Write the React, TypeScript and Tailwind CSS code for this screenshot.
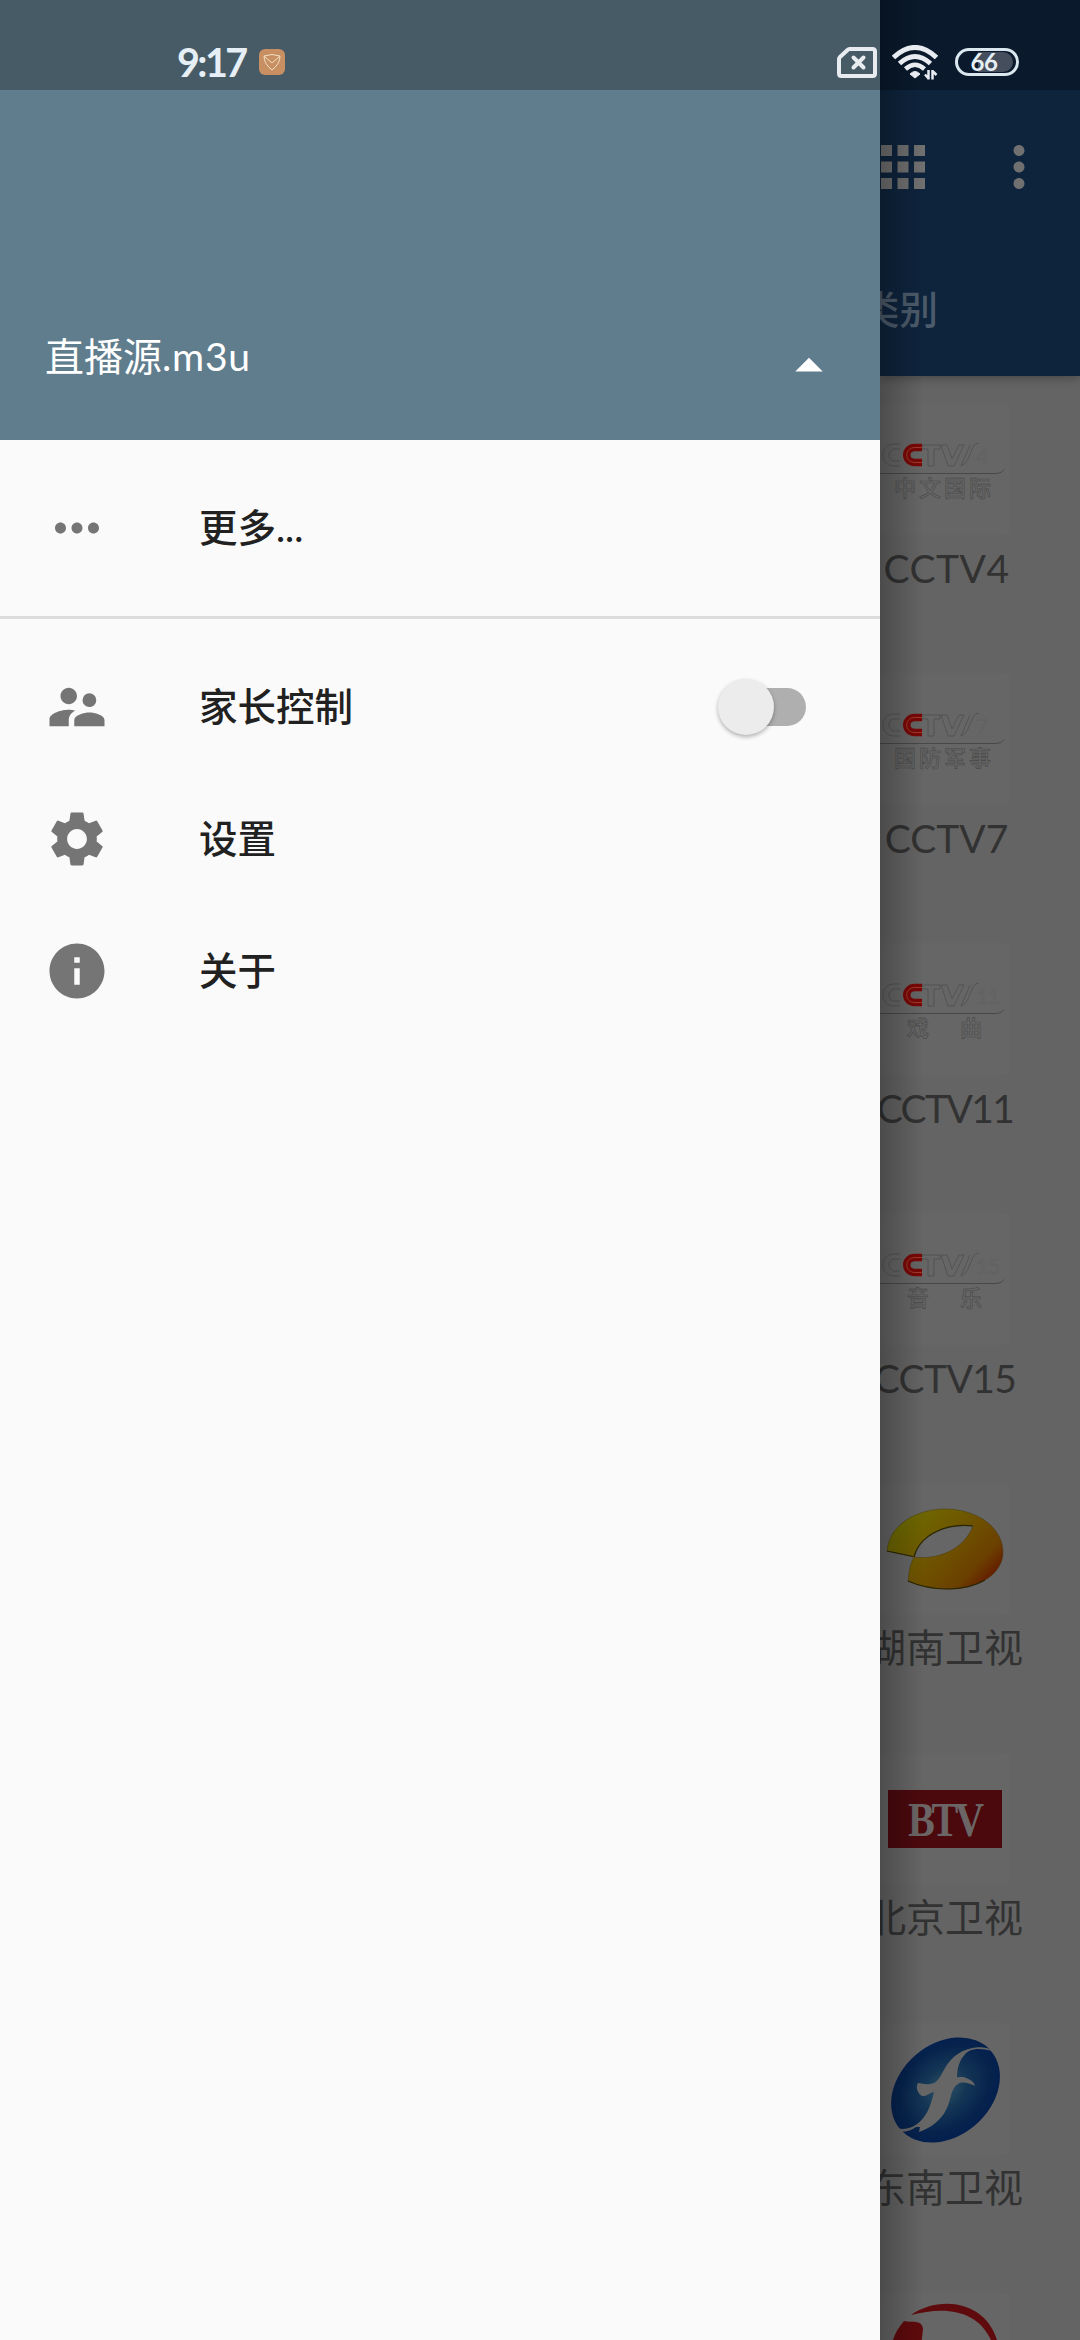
import type { ReactNode } from "react";
import {
  MdApps,
  MdArrowDropUp,
  MdInfo,
  MdMoreHoriz,
  MdMoreVert,
  MdSettings,
  MdSupervisorAccount,
} from "react-icons/md";

interface Channel {
  name: string;
  logo: ReactNode;
  nameClass: string;
}

interface CctvLogoProps {
  number: string;
  caption: string;
  captionX: string;
}

function CctvLogo({ number, caption, captionX }: CctvLogoProps) {
  return (
    <svg viewBox="0 0 130 132" className="h-full w-full" fill="none">
      <g
        stroke="#484848"
        strokeWidth="0.6"
        fontFamily="Lato, 'Noto Sans CJK SC', sans-serif"
      >
        <path d="M20 41H14C-1 41-1 63 14 63h6M20 46h-5c-8 0-8 12 0 12h5" />
        <path d="M42 42h18v4h-6v17h-6V46h-6zM61 42h6l5 14 7-14h5L74 63h-6z" />
        <path d="M90 42 81 63q5-2 7-7l5-12q2-4 6-4" />
        <path d="M-8 70.500H116q6 0 8-4" stroke="#454545" strokeWidth="0.9" />
        <text x="96" y="61" fontSize="21" stroke="#606060">
          {number}
        </text>
        <text x={captionX} y="93" fontSize="22" fontWeight="500">
          {caption}
        </text>
      </g>
      <path d="M42 44.500h-7c-11 0-11 15 0 15h7" stroke="#780808" strokeWidth="7.500" />
      <path d="M42 44.500h-7c-11 0-11 15 0 15h7" stroke="#a8402c" strokeWidth="0.9" />
    </svg>
  );
}

function HunanLogo() {
  return (
    <svg viewBox="0 0 130 132" className="h-full w-full">
      <defs>
        <linearGradient id="hunan" x1="0" y1="0.1" x2="1" y2="0.75">
          <stop offset="0" stopColor="#6d7000" />
          <stop offset="0.45" stopColor="#6f5800" />
          <stop offset="0.82" stopColor="#6b4000" />
          <stop offset="1" stopColor="#641800" />
        </linearGradient>
      </defs>
      <path
        fill="url(#hunan)"
        stroke="#3d3205"
        strokeWidth="0.4"
        fillRule="evenodd"
        d="M7 68C9 42 36 26 65 26c34 0 58 20 58 43 0 22-24 37-55 37-15 0-29-3-40-8 1-9 2-17 6-24zM34 74c20 3 49-5 59-31-26-3-53 8-59 31z"
      />
      <path
        d="M7 68l26 5.500M34 74c6-23 33-34 59-31M28 98c11 5 25 8 40 8 14 0 27-3 37-9"
        fill="none"
        stroke="#2a2604"
        strokeWidth="1.200"
      />
    </svg>
  );
}

function BtvLogo() {
  return (
    <div className="flex h-[58px] w-[114px] items-center justify-center bg-[#4b090d] pr-[2px]">
      <span className="scale-x-82 font-['Liberation_Serif',serif] text-[49px] leading-none font-bold tracking-[-4px] text-[#6c6566]">
        BTV
      </span>
    </div>
  );
}

function SoutheastLogo() {
  return (
    <svg viewBox="0 0 130 132" className="h-full w-full">
      <defs>
        <radialGradient id="southeast" cx="0.5" cy="0.48" r="0.52">
          <stop offset="0" stopColor="#2d5366" />
          <stop offset="0.4" stopColor="#143655" />
          <stop offset="0.8" stopColor="#06234d" />
          <stop offset="1" stopColor="#041f4e" />
        </radialGradient>
      </defs>
      <ellipse
        cx="65.500"
        cy="67"
        rx="60"
        ry="46"
        fill="url(#southeast)"
        transform="rotate(-41 65.500 67)"
      />
      <path
        fill="#666"
        d="M98 24C82 26 72 33 65 45c-6 11-8 15-15 16-4 1-8-1-12-1-3 4 0 11 4 13 4 1 7-3 12-4-3 12-7 28-22 35-8 3-13 2-19 0l2 5c8 0 14 0 21-5l4 0-1 5c12-4 22-12 27-22 6-11 4-21 12-26 5-3 10-1 17 2-1-5-6-7-9-8-3-2-7 0-9-1 0-11 4-21 12-26 7-3 15-2 23 0l-5-3c-6-1-9-1-15 0z"
      />
    </svg>
  );
}

function RedSwirlLogo() {
  return (
    <svg viewBox="0 0 130 132" className="h-full w-full" fill="#5f0a0c">
      <path d="M31 22C60 2 105 8 117 47l-4 5C101 18 68 12 31 22z" />
      <path d="M12 52c1-9 6-17 12-24 7 2 18-2 19 8l-2 18z" />
    </svg>
  );
}

const channels: Channel[] = [
  {
    name: "CCTV4",
    logo: <CctvLogo number="4" caption="中文国际" captionX="14 39 64 89" />,
    nameClass: "mt-[13px] ml-[3px] tracking-[0.5px]",
  },
  {
    name: "CCTV7",
    logo: <CctvLogo number="7" caption="国防军事" captionX="14 39 64 89" />,
    nameClass: "mt-[13px] ml-[3px]",
  },
  {
    name: "CCTV11",
    logo: <CctvLogo number="11" caption="戏曲" captionX="27 80" />,
    nameClass: "mt-[13px] tracking-[-1.6px]",
  },
  {
    name: "CCTV15",
    logo: <CctvLogo number="15" caption="音乐" captionX="27 80" />,
    nameClass: "mt-[13px] tracking-[-0.6px]",
  },
  { name: "湖南卫视", logo: <HunanLogo />, nameClass: "mt-[12px]" },
  { name: "北京卫视", logo: <BtvLogo />, nameClass: "mt-[12px]" },
  { name: "东南卫视", logo: <SoutheastLogo />, nameClass: "mt-[12px]" },
  { name: "", logo: <RedSwirlLogo />, nameClass: "mt-[12px]" },
];

function StatusBar() {
  return (
    <div className="absolute inset-x-0 top-0 z-20 flex h-[90px] items-center bg-black/27 pt-[34px] pr-[61px] pl-[177px] text-[#e6eff6]">
      <span className="w-[69px] font-[Lato,sans-serif] text-[39.5px] leading-none font-bold tracking-[-2.6px] whitespace-nowrap">
        9:17
      </span>
      <svg viewBox="0 0 26 26" className="ml-[13px] size-[26px]">
        <rect width="26" height="26" rx="6" fill="#c78f62" />
        <path
          d="M5 7q8-3 16 0 0 8-8 14Q5 15 5 7l8 7 8-7"
          fill="none"
          stroke="#f3e0c4"
          strokeWidth="1"
        />
      </svg>

      <div className="ml-auto flex items-center">
        <svg viewBox="0 0 40 31" className="h-[31px] w-[40px]" fill="none" stroke="#e8ecf1">
          <path
            d="M12.500 2H35.500Q38 2 38 4.500V26.500Q38 29 35.500 29H4.500Q2 29 2 26.500V12Q2 11 3 10L10.500 3Q11.500 2 12.500 2z"
            strokeWidth="4"
          />
          <path d="M16.500 10.500l10 10M26.500 10.500l-10 10" strokeWidth="4" strokeLinecap="round" />
        </svg>
        <svg viewBox="0 0 46 35" className="ml-[15px] h-[35px] w-[46px]" fill="none" stroke="#e8ecf1">
          <path d="M1.500 12.500Q23-7.500 44.500 12.500" strokeWidth="5" />
          <path d="M7.500 18.500Q23 4.500 38.500 18.500" strokeWidth="5" />
          <path d="M13.500 24Q23 15.500 32.500 24" strokeWidth="4.500" />
          <path d="M18 29q5-5 10 0l-5 4z" fill="#e8ecf1" strokeWidth="1" />
          <path d="M36.500 25v9.500M33 29.500l3.500 4M40.500 34.500V25M44.500 30l-4-4" strokeWidth="2.500" />
        </svg>
        <div className="relative ml-[17px] flex h-[28px] w-[64px] items-center justify-center overflow-hidden rounded-full border-[3px] border-[#dbe7ee]">
          <div className="absolute inset-y-[1px] left-[20px] w-[35px] rounded-r-full bg-[#444e5d]" />
          <span className="relative mr-[6px] font-[Lato,sans-serif] text-[24px] leading-none font-bold tracking-[-0.5px]">
            66
          </span>
        </div>
      </div>
    </div>
  );
}

interface MenuItemProps {
  icon: ReactNode;
  label: string;
  children?: ReactNode;
}

function MenuItem({ icon, label, children }: MenuItemProps) {
  return (
    <li className="flex h-[132px] items-center pr-[74px] pl-[44px] text-[#212121]">
      <span className="text-[66px] text-[#757575]">{icon}</span>
      <span className="mb-[2px] ml-[89px] text-[38.5px] leading-none font-medium">{label}</span>
      {children}
    </li>
  );
}

function Switch() {
  return (
    <div className="relative ml-auto h-[38px] w-[76px] rounded-full bg-[#afafaf]">
      <div className="absolute -top-[9px] -left-[12px] size-[56px] rounded-full bg-[#ececec] shadow-[0_2px_4px_rgba(0,0,0,0.3)]" />
    </div>
  );
}

function Drawer() {
  return (
    <aside className="flex w-[880px] shrink-0 flex-col bg-[#fafafa]">
      <header className="flex h-[440px] items-end justify-between bg-[#607d8d] pr-[38px] pb-[41px] pl-[45px] text-white">
        <span className="mb-[23px] text-[39px] leading-none">
          直播源<span className="tracking-[0.8px]">.m3u</span>
        </span>
        <MdArrowDropUp size={66} />
      </header>
      <ul className="py-[22px]">
        <MenuItem icon={<MdMoreHoriz />} label="更多..." />
      </ul>
      <ul className="border-t-[3px] border-[#dcdcdc] pt-[22px]">
        <MenuItem icon={<MdSupervisorAccount />} label="家长控制">
          <Switch />
        </MenuItem>
        <MenuItem icon={<MdSettings />} label="设置" />
        <MenuItem icon={<MdInfo />} label="关于" />
      </ul>
    </aside>
  );
}

function ChannelPane() {
  return (
    <main className="relative flex w-[200px] flex-col overflow-hidden bg-[#646464]">
      <header className="z-10 flex h-[376px] shrink-0 flex-col bg-[#0e243d] pt-[134px] shadow-[0_2px_10px_rgba(0,0,0,0.3)]">
        <div className="-ml-[10px] flex justify-between pr-[28px] text-[#707070]">
          <MdApps size={66} />
          <MdMoreVert size={66} />
        </div>
        <div className="mt-[90px] -ml-[19px] text-[38.5px] leading-none font-medium text-[#4c5b6b]">
          类别
        </div>
      </header>
      {/* last column of the four-column grid, partly under the drawer */}
      <div className="-ml-[70px] flex w-[270px] flex-col pt-[27px]">
        {channels.map((channel, index) => (
          <div key={index} className="flex h-[270px] shrink-0 flex-col items-center">
            <div className="flex h-[132px] w-[130px] items-center justify-center rounded-md bg-[#666]">
              {channel.logo}
            </div>
            <span
              className={`text-[39px] leading-[40px] whitespace-nowrap text-[#323232] ${channel.nameClass}`}
            >
              {channel.name}
            </span>
          </div>
        ))}
      </div>
      <div className="absolute inset-y-0 left-0 z-20 w-[44px] bg-linear-to-r from-black/25 to-transparent" />
    </main>
  );
}

export default function App() {
  return (
    <div className="relative flex h-[2340px] w-[1080px] overflow-hidden font-[Lato,'Noto_Sans_CJK_SC',sans-serif]">
      <Drawer />
      <ChannelPane />
      <StatusBar />
    </div>
  );
}
